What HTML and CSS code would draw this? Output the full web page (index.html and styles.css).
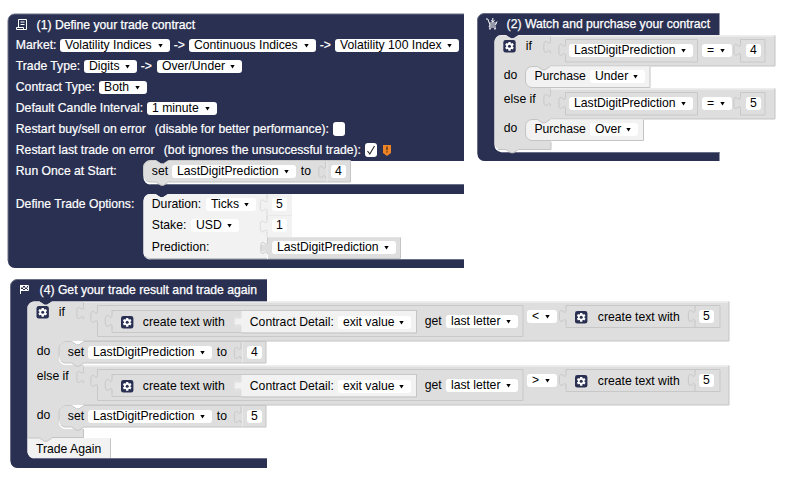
FILE: index.html
```html
<!DOCTYPE html>
<html lang="en">
<head>
<meta charset="utf-8">
<title>Trade bot workspace</title>
<link rel="stylesheet" href="styles.css">
</head>
<body>
<main class="workspace">
<svg class="shapes" viewBox="0 0 787 482" aria-hidden="true">
  <defs>
    <path id="tab" d="M0 0v4.2c0 8.3-6.7-6.7-6.7 6.2s6.7-2 6.7 6.3"/>
    <g id="gear">
      <rect width="12.4" height="12.6" rx="2.4" fill="#2a3052"/>
      <path d="M6.2 1.9v8.8M2.4 4.1l7.6 4.4M2.4 8.5 10 4.1" stroke="#fff" stroke-width="2.3"/>
      <circle cx="6.2" cy="6.3" r="3.2" fill="#fff"/>
      <circle cx="6.2" cy="6.3" r="1.5" fill="#2a3052"/>
    </g>
    <g id="compare">
      <path class="gray" d="M0 0H224.500V30.500H0z"/>
      <path class="lo" d="M224.500 0V30.500H0"/>
      <path class="hi" d="M0 1H223.500"/>
      <use href="#tab" class="line" x="0" y="1"/>
      <path class="line" d="M147 4V26.500H15V20.500M15 7V4H147M214.500 4V26.500H190V20.500M190 7V4H214.500"/>
      <use href="#tab" class="line" x="15" y="4"/>
      <use href="#tab" class="line" x="190" y="4"/>
    </g>
    <g id="long">
      <path class="gray" d="M0 0H645.500V39.500H0z"/>
      <path class="lo" d="M645.500 0V39.500H0"/>
      <path class="hi" d="M0 1H644.500"/>
      <use href="#tab" class="line" x="0" y="1"/>
      <path class="line" d="M439.500 4V35H14V21M14 6V4H439.500M158 31H28.500V25M28.500 10V9H334M482.500 20V26H636.500V4H482.500V5M611.500 20V26M611.500 4V6"/>
      <use href="#tab" class="line" x="14" y="5"/>
      <use href="#tab" class="line" x="28.500" y="9"/>
      <use href="#tab" class="line" x="482.500" y="4"/>
      <use href="#tab" class="line" x="611.500" y="4"/>
      <path class="light" d="M158 9.500H333V31H158V26c0-8-7 2-7-6s7 2 7-6z"/>
      <path class="lo" d="M333 9.500V31.500H158"/>
      <use href="#tab" class="hi" x="158" y="10"/>
      <use href="#gear" x="37.500" y="14.500"/>
      <use href="#gear" x="491.500" y="9.500"/>
    </g>
    <g id="set">
      <path class="gray" d="M0 6.700A6.700 6.700 0 0 1 6.700 0H12.500l5 3.300h2.500l5-3.300H207V21.500H25l-5 3.300h-2.500l-5-3.300H6.700A6.700 6.700 0 0 1 0 14.800z"/>
      <path class="lo" d="M207 0V21.500H25l-5 3.300h-2.500l-5-3.300H6.700A6.700 6.700 0 0 1 2 19.600"/>
      <path class="line" d="M0 15V6.700A6.700 6.700 0 0 1 6.700 0H12.500l5 3.300h2.500l5-3.300H207"/>
      <use href="#tab" class="line" x="182" y="1"/>
      <path class="hi" d="M183.500 1V21"/>
    </g>
  </defs>

  <!-- Trade contract -->
  <path class="navy" d="M8 20.700A6.700 6.700 0 0 1 14.700 14H464V161H168l-5 3.300h-2.500L155.500 161H150A6.700 6.700 0 0 0 143.500 167.700V178A6.700 6.700 0 0 0 150 184.500H464V194H168l-5 3.300h-2.500L155.500 194H150A6.700 6.700 0 0 0 143.500 200.700V253A6.700 6.700 0 0 0 150 259.500H464V268H14.700A6.700 6.700 0 0 1 8 261.300z"/>
  <path class="edge" d="M8 261V20.700A6.700 6.700 0 0 1 14.700 14H464M150 184.500H464M150 259.500H464"/>
  <use href="#set" x="143.500" y="160.500"/>
  <path class="light" d="M143.500 200.700A6.700 6.700 0 0 1 150 194H155.500l5 3.300h2.500l5-3.300H292V237.500H267V259H150A6.700 6.700 0 0 1 143.500 252z"/>
  <path class="lo" d="M267 258.500H150A6.700 6.700 0 0 1 145 256"/>
  <path class="pale" d="M267 194v4M267 211v9M267 232v5"/>
  <path stroke="#e8e8e8" d="M267.500 215.500H292"/>
  <use href="#tab" class="pale" x="267" y="195"/>
  <use href="#tab" class="pale" x="267" y="216"/>
  <path class="gray" d="M268 237.500H400.500V258.500H268V253c-1-6-7 3-7-5s6 1 7-6z"/>
  <path class="lo" d="M400.500 237.500V258.500H268"/>
  <path class="pale" d="M268 238H400"/>
  <use href="#tab" class="line" x="267.500" y="237.500"/>

  <!-- Purchase -->
  <path class="navy" d="M477.500 20A6.700 6.700 0 0 1 484 13.500H719.500V35H518.500l-5 3.300H511L506 35H501A6.700 6.700 0 0 0 494.500 42V145A6.700 6.700 0 0 0 501 152H719.500V161H484A6.700 6.700 0 0 1 477.500 154.500z"/>
  <path class="edge" d="M477.500 154V20A6.700 6.700 0 0 1 484 13.500H719.500M501 152.500H719.500"/>
  <path class="white" d="M495 140V145A6.700 6.700 0 0 0 501 151.500H551V140z"/>
  <path class="gray" d="M494.500 42A6.700 6.700 0 0 1 501 35.500H506l5 3.300h2.500l5-3.300H551V149.500H518.500l-5 3.300H511l-5-3.300H500A6.700 6.700 0 0 1 494.500 144z"/>
  <path class="lo" d="M551 142V149.500H518.500l-5 3.300H511l-5-3.300H498"/>
  <use href="#compare" x="550.500" y="35.500"/>
  <use href="#compare" x="550.500" y="88.500"/>
  <path class="light" d="M525.500 73A6.700 6.700 0 0 1 532 66.500H537.500l5 3.300h2.500l5-3.300H650V87.500H532A6.700 6.700 0 0 1 525.500 81z"/>
  <path class="lo" d="M650 66.500V87.500H532A6.700 6.700 0 0 1 525.500 81V73A6.700 6.700 0 0 1 532 66.500H537.500l5 3.300h2.500l5-3.300"/>
  <path class="light" d="M525.500 126A6.700 6.700 0 0 1 532 119.500H537.500l5 3.300h2.500l5-3.300H643.500V140.500H532A6.700 6.700 0 0 1 525.500 134z"/>
  <path class="lo" d="M643.500 119.500V140.500H532A6.700 6.700 0 0 1 525.500 134V126A6.700 6.700 0 0 1 532 119.500H537.500l5 3.300h2.500l5-3.300"/>
  <use href="#gear" x="503.300" y="40"/>

  <!-- Trade again -->
  <path class="navy" d="M10.500 286A6.700 6.700 0 0 1 17 279.500H267V301.500H52l-5 3.300h-2.500L39.500 301.500H34A6.700 6.700 0 0 0 27.500 308V452A6.700 6.700 0 0 0 34 458.500H267V468H17A6.700 6.700 0 0 1 10.500 461.500z"/>
  <path class="edge" d="M10.500 461V286A6.700 6.700 0 0 1 17 279.500H267M34 458.500H267"/>
  <path class="gray" d="M27.500 308A6.700 6.700 0 0 1 34 301.500H39.500l5 3.300H47l5-3.300H84V438H27.500z"/>
  <use href="#long" x="83.500" y="301.500"/>
  <use href="#long" x="83.500" y="365.500"/>
  <path class="white" d="M59 348V358Q59 365 66 365H84V341H66Q59 341 59 348M59 412V422Q59 429 66 429H84V405H66Q59 405 59 412"/>
  <use href="#set" x="59" y="341.500"/>
  <use href="#set" x="59" y="405.500"/>
  <path class="lo" d="M83.500 429V437.500H52"/>
  <path class="light" d="M27.500 438H39.500l5 3.300H47l5-3.300H110.500V458H34A6.700 6.700 0 0 1 27.500 452z"/>
  <path class="gray" d="M39.500 437.500l5 3.800H47l5-3.800z"/>
  <path class="lo" d="M110.500 438.500V458M28 438H39.500l5 3.300H47l5-3.300"/>
  <use href="#gear" x="36.500" y="306"/>
</svg>

<section class="stack contract">
  <header class="head"><svg class="icon" viewBox="0 0 12 12"><path d="M2.500 8.500V.5h8v9M.5 8.500h7v2h3V9M.5 8.500v2h8M4.500 3h4M4.500 5.500h4" /></svg><h2>(1) Define your trade contract</h2></header>
  <div class="row market"><span>Market:</span><b class="field">Volatility Indices</b><span class="to">-&gt;</span><b class="field">Continuous Indices</b><span class="to">-&gt;</span><b class="field">Volatility 100 Index</b></div>
  <div class="row type"><span>Trade Type:</span><b class="field">Digits</b><span class="to">-&gt;</span><b class="field">Over/Under</b></div>
  <div class="row kind"><span>Contract Type:</span><b class="field">Both</b></div>
  <div class="row candle"><span>Default Candle Interval:</span><b class="field">1 minute</b></div>
  <div class="row buy"><span>Restart buy/sell on error</span><span>(disable for better performance):</span><i class="check"></i></div>
  <div class="row last"><span>Restart last trade on error</span><span>(bot ignores the unsuccessful trade):</span><i class="check"><svg viewBox="0 0 12 14"><path d="M2.500 8 4.800 11 9.500 3"/></svg></i><svg class="warn" viewBox="0 0 8 11"><path fill="#ee8425" d="M0 0h8v8L4 11 0 8z"/><path fill="#5b3715" d="M3.300 1.500h1.400v3.700H3.300zM3.300 6.200h1.400v1.400H3.300z"/></svg></div>
  <div class="row once"><span>Run Once at Start:</span><div class="setter"><span>set</span><b class="field">LastDigitPrediction</b><span>to</span><b class="num">4</b></div></div>
  <div class="options"><span>Define Trade Options:</span>
    <div class="inputs">
      <div class="row duration"><span>Duration:</span><b class="field">Ticks</b><b class="num">5</b></div>
      <div class="row stake"><span>Stake:</span><b class="field">USD</b><b class="num">1</b></div>
      <div class="row predict"><span>Prediction:</span><b class="field">LastDigitPrediction</b></div>
    </div>
  </div>
</section>

<section class="stack purchase">
  <header class="head"><svg class="icon" viewBox="0 0 12 12"><path d="M0 1h1.800l2.200 6h5.500l1.500-3.500M3.500 5h6.800M6.800 0v4M5 2.300 6.800 4 8.600 2.300M4 7 3 9h7"/><circle cx="4" cy="10.700" r=".6"/><circle cx="9" cy="10.700" r=".6"/></svg><h2>(2) Watch and purchase your contract</h2></header>
  <div class="test"><span class="if">if</span><b class="field">LastDigitPrediction</b><b class="field">=</b><b class="num">4</b></div>
  <div class="do under"><span>do</span><span class="verb">Purchase</span><b class="field">Under</b></div>
  <div class="test"><span>else if</span><b class="field">LastDigitPrediction</b><b class="field">=</b><b class="num">5</b></div>
  <div class="do over"><span>do</span><span class="verb">Purchase</span><b class="field">Over</b></div>
</section>

<section class="stack again">
  <header class="head"><svg class="icon" viewBox="0 0 12 12"><path d="M1.500 1v9M1.500 1.500h8v5h-8"/><path class="fill" d="M2 2h2v1.500H2zM6 2h2v1.500H6zM4 3.500h2V5H4zM8 3.500h1.500V5H8zM2 5h2v1.500H2zM6 5h2v1.500H6z"/></svg><h2>(4) Get your trade result and trade again</h2></header>
  <div class="query"><span class="if">if</span><span class="low">create text with</span><span class="low detail">Contract Detail:</span><b class="field low">exit value</b><span class="mid">get</span><b class="field mid">last letter</b><b class="field op">&lt;</b><span class="right">create text with</span><b class="num">5</b></div>
  <div class="action"><span>do</span><div class="setter"><span>set</span><b class="field">LastDigitPrediction</b><span>to</span><b class="num">4</b></div></div>
  <div class="query"><span>else if</span><span class="low">create text with</span><span class="low detail">Contract Detail:</span><b class="field low">exit value</b><span class="mid">get</span><b class="field mid">last letter</b><b class="field op">&gt;</b><span class="right">create text with</span><b class="num">5</b></div>
  <div class="action"><span>do</span><div class="setter"><span>set</span><b class="field">LastDigitPrediction</b><span>to</span><b class="num">5</b></div></div>
  <div class="finish">Trade Again</div>
</section>
</main>
</body>
</html>
```
FILE: styles.css
```css
* { box-sizing: border-box; }
body { margin: 0; background: #fff; }
.workspace {
  position: relative;
  width: 787px;
  height: 482px;
  overflow: hidden;
  font: 12.2px/13px "Liberation Sans", Arial, sans-serif;
  color: #000;
  white-space: nowrap;
}

/* Block silhouettes under the labels */
.shapes { position: absolute; inset: 0; width: 787px; height: 482px; fill: none; }
.navy { fill: #2a3052; }
.gray { fill: #dedede; }
.light { fill: #f2f2f2; }
.white { fill: #fff; }
.edge { stroke: #6a6e86; }
.line { stroke: #c8c8c8; }
.lo { stroke: #c4c4c4; }
.hi { stroke: #e9e9e9; }
.pale { stroke: #dcdcdc; }

/* The three block stacks sit freely on the canvas */
.stack { position: absolute; }
.contract { left: 15px; top: 14px; }
.purchase { left: 485px; top: 13px; }
.again { left: 18px; top: 279px; }

span { text-indent: .8px; }
.head { display: grid; grid-template-columns: 21.6px auto; padding-top: 5px; height: 25px; color: #fff; }
.head h2 { margin: 0; font-size: inherit; font-weight: normal; -webkit-text-stroke: .25px #fff; }
.icon { width: 12px; height: 12px; margin-left: 1px; fill: none; stroke: #fff; }
.icon .fill { fill: #fff; stroke: none; }
.purchase .head { height: 27px; }
.again .head { height: 27px; }

.row, .setter, .test, .do, .query, .action { display: grid; align-items: start; }
.row { height: 21px; }
.contract { color: #fff; -webkit-text-stroke: .2px; }
.setter, .inputs, .field, .num { color: #000; -webkit-text-stroke: 0; }

.field, .num {
  display: flex;
  align-items: center;
  justify-content: space-between;
  height: 13px;
  padding: 0 7px 0 5px;
  border-radius: 3px;
  background: #fff;
  font-weight: normal;
}
.field::after {
  content: "";
  width: 5px;
  height: 4px;
  background: #000;
  clip-path: polygon(0 0, 100% 0, 50% 100%);
}
.num { padding: 0 4px; }
.to { padding-left: 3px; }

.market { grid-template-columns: 45px 110px 19px 127px 19px 124px; }
.type { grid-template-columns: 69px 53px 20px 85px; }
.kind { grid-template-columns: 84px 48px; }
.candle { grid-template-columns: 132px 70px; }
.buy { grid-template-columns: 139px 179px 12px; }
.last { grid-template-columns: 148px 202px 12px 8px; }
.once { grid-template-columns: 136px auto; }
.check { width: 12px; height: 14px; margin-top: -1px; border-radius: 3px; background: #fff; }
.check svg { display: block; fill: none; stroke: #333; stroke-width: 1.2; }
.warn { width: 8px; height: 11px; margin: 1px 0 0 6px; }
.setter { grid-template-columns: 21px 124px 35px 15px; }
.setter > :nth-child(3) { padding-left: 4px; }

.options { display: grid; grid-template-columns: 136px auto; margin-top: 12px; }
.duration { grid-template-columns: 55px 50px 16px 15px; }
.duration .num, .stake .num { grid-column: 4; }
.stake { grid-template-columns: 40px 48px 33px 15px; height: 22px; }
.predict { grid-template-columns: 121px 124px; }

.test { grid-template-columns: 84px 124px 9px 30px 14px 15px; height: 26px; }
.test > span { padding-left: 18px; }
.test > .if { padding-left: 40px; }
.test > .field, .test > .num { margin-top: 4px; }
.test > .field:nth-child(3) { grid-column: 4; }
.test > .num { grid-column: 6; }
.do { padding: 3px 0 0 18px; height: 27px; }
.under { grid-template-columns: 30px 57px 55px; }
.over { grid-template-columns: 30px 57px 48px; }
.verb, .do .field { margin-top: 1px; }
.verb { padding-left: .6px; }

.query { grid-template-columns: 124px 106px 90px 73px 13px 22px 72px 9px 30px 40px 102px 15px; height: 39px; }
.query > :first-child { padding-left: 18px; }
.query > .if { padding-left: 40px; }
.query .low { margin-top: 10px; }
.query .detail { padding-left: 1px; }
.query .mid { margin-top: 9px; }
.query span.mid { grid-column: 6; }
.query .op { grid-column: 9; margin-top: 4px; }
.query .right { grid-column: 11; margin-top: 5px; }
.query .num { margin-top: 4px; }
.action { grid-template-columns: 31px auto; padding-left: 18px; height: 25px; }
.action .setter { margin-top: 1px; }
.finish { margin: 9px 0 0 18px; }
```
